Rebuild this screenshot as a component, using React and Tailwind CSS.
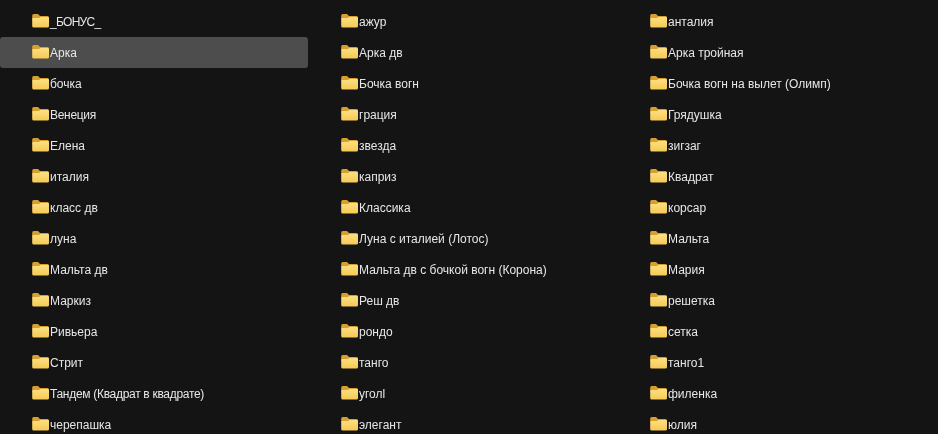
const rows = [
  ["_БОНУС_", "ажур", "анталия"],
  ["Арка", "Арка дв", "Арка тройная"],
  ["бочка", "Бочка вогн", "Бочка вогн на вылет (Олимп)"],
  ["Венеция", "грация", "Грядушка"],
  ["Елена", "звезда", "зигзаг"],
  ["италия", "каприз", "Квадрат"],
  ["класс дв", "Классика", "корсар"],
  ["луна", "Луна с италией (Лотос)", "Мальта"],
  ["Мальта дв", "Мальта дв с бочкой вогн (Корона)", "Мария"],
  ["Маркиз", "Реш дв", "решетка"],
  ["Ривьера", "рондо", "сетка"],
  ["Стрит", "танго", "танго1"],
  ["Тандем (Квадрат в квадрате)", "уголl", "филенка"],
  ["черепашка", "элегант", "юлия"],
];

// these names come out too wide in Liberation Sans
const tight = {
  "_БОНУС_": "tracking-[-0.7px]",
  "Венеция": "tracking-[-0.3px]",
  "Тандем (Квадрат в квадрате)": "tracking-[-0.3px]",
};

function FolderIcon() {
  return (
    <svg width="18" height="14" viewBox="0 0.5 18 14" className="mb-px shrink-0">
      <defs>
        <linearGradient id="folder-front" x1="0" y1="0" x2="0" y2="1">
          <stop offset="0" stopColor="#fcdf82" />
          <stop offset="1" stopColor="#f6ca55" />
        </linearGradient>
      </defs>
      <path d="M0.2 2 Q0.2 0.5 1.7 0.5 H6 L8 2.5 H15.5 Q17 2.5 17 4 V6 H0.2 Z" fill="#d69f2e" />
      <path d="M0.2 5.5 Q0.2 4.5 1.7 4.5 L7 4.5 L8.5 3.5 H15.5 Q17 3.5 17 4.8 V12.5 Q17 14 15.5 14 H1.7 Q0.2 14 0.2 12.5 Z" fill="url(#folder-front)" />
    </svg>
  );
}

export default function App() {
  return (
    <div className="h-[434px] w-[938px] overflow-hidden bg-[#141414] pt-[6px] font-['Liberation_Sans',sans-serif] text-[12px] text-[#e6e6e6] blur-[0.4px]">
      <div className="grid grid-cols-[309px_309px_320px]">
        {rows.map((row) =>
          row.map((name) => (
            <div key={name} className={`flex h-[31px] items-center pl-[32px] ${name === "Арка" ? "w-[308px] rounded-[3px] bg-[#4d4d4d]" : ""}`}>
              <FolderIcon />
              <span className={`whitespace-nowrap ${tight[name] ?? ""}`}>{name}</span>
            </div>
          ))
        )}
      </div>
    </div>
  );
}
